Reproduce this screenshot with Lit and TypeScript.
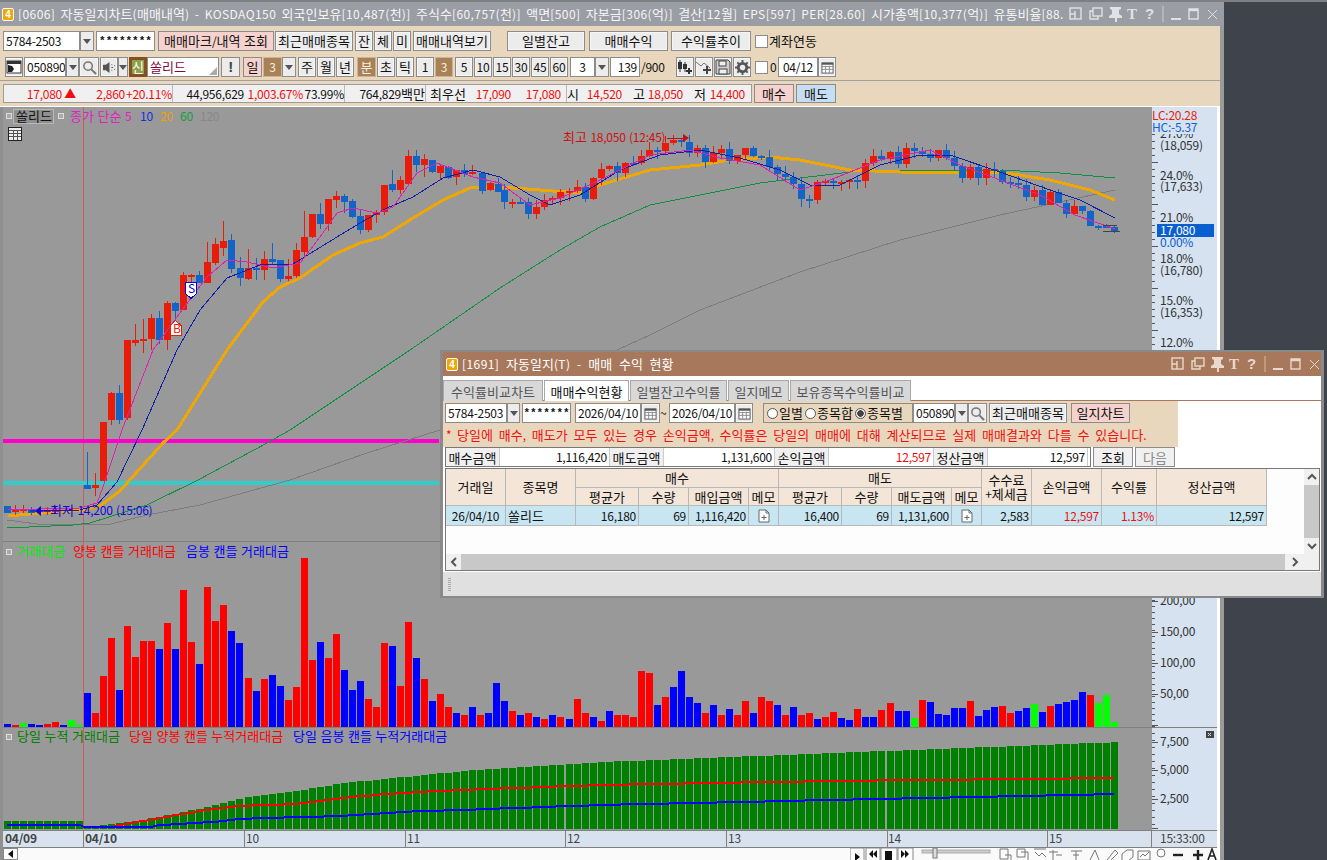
import { LitElement, html, css, svg, nothing } from "lit";
import { customElement } from "lit/decorators.js";

type Item = { x: number; e: number; t?: unknown; c: string };
const X = (j: number) => Math.round(84 + 8.025 * j);
const it = (x: number, e: number, t: unknown, c = "b"): Item => ({ x, e, t, c });

/* Hangul runs sit at 13px (12px advance), digits and Latin at a tighter 12px. */
const runs = (s: string) => s.match(/[\uac00-\ud7a3]+|[^\uac00-\ud7a3]+/g) ?? [];
const isK = (r: string) => /[\uac00-\ud7a3]/.test(r);
const m = (s: string) => html`<span>${runs(s).map((r) => (isK(r) ? html`<span class="k">${r}</span>` : r))}</span>`;
const tx = (x: number, y: number, fill: string, s: string, cls = "") =>
  svg`<text x=${x} y=${y} fill=${fill} class=${cls}>${runs(s).map((r) => (isK(r) ? svg`<tspan class="k">${r}</tspan>` : svg`<tspan>${r}</tspan>`))}</text>`;

const lerp = (p: number[][], x: number) => {
  if (x <= p[0][0]) return p[0][1];
  for (let i = 1; i < p.length; i++) {
    if (x <= p[i][0]) {
      const [a, b] = p[i - 1], [c, d] = p[i];
      return b + ((d - b) * (x - a)) / (c - a);
    }
  }
  return p[p.length - 1][1];
};
const pts = (p: number[][]) => p.map((q) => q.join(",")).join(" ");

/* --- candles: centre x, body top, body bottom, wick top, wick bottom, colour --- */
const zc = [
  [226,660,668,612,678,"r"],[250,657,663,597,700,"r"],[274,594,657,582,690,"r"],[298,594,660,573,672,"b"],
  [322,549,660,543,690,"r"],[346,549,573,546,600,"b"],[370,465,570,456,570,"r"],[394,465,471,462,490,"r"],
  [418,465,489,453,489,"b"],[442,426,489,366,489,"r"],[466,372,429,354,435,"r"],[490,363,384,303,408,"r"],
  [514,360,447,342,459,"b"],[541,444,474,411,498,"b"],[565,444,477,387,480,"r"],[589,444,450,414,480,"b"],
  [613,417,450,393,480,"r"],[637,417,426,369,432,"b"],[661,420,477,420,486,"b"],[685,468,477,417,483,"r"],
  [709,390,468,369,474,"r"],[733,351,396,273,408,"r"],[757,282,351,282,354,"r"],[781,282,312,249,327,"b"],
  [805,237,312,237,333,"r"],[829,228,240,213,264,"r"],[853,228,246,222,279,"b"],[877,243,291,237,294,"b"],
  [901,288,330,270,342,"b"],[925,285,330,285,336,"r"],[949,276,285,270,309,"r"],[973,195,276,195,285,"r"],
  [997,192,210,150,216,"b"],[1021,180,210,168,222,"r"],[1045,108,192,90,192,"r"],[1069,108,135,90,156,"b"],
  [1093,117,135,102,171,"r"],[1117,120,156,120,159,"b"],[1141,138,159,135,177,"r"],[1165,141,174,138,177,"b"],
  [1189,150,171,150,195,"r"],[1213,150,162,132,171,"b"],[1237,156,162,135,165,"r"],[1265,159,213,159,222,"b"],
  [1289,189,210,186,213,"r"],[1313,192,216,174,216,"b"],
] as [number, number, number, number, number, string][];

const candles: [number, number, number, number, number, string][] = [
  [7,506,513,506,513,"b"],[15,509,512,505,515,"r"],[23,509,511,505,513,"r"],[31,509,513,507,515,"b"],
  [39,510,511,507,514,"r"],[47,510,512,507,515,"r"],[55,510,511,507,514,"r"],
  [87,485,489,452,489,"b"],[95,485,488,473,496,"r"],[103,422,481,422,481,"r"],[111,393,420,392,425,"r"],
  [119,393,420,385,424,"b"],[127,340,418,340,420,"r"],
  ...zc.map((c) => [Math.round(60 + c[0] / 3), 120 + c[1] / 3, 120 + c[2] / 3, 120 + c[3] / 3, 120 + c[4] / 3, c[5]] as [number, number, number, number, number, string]),
];
const closePath = [[495,190],[510,200],[525,206],[540,208],[555,200],[570,197],[590,192],[600,178],[615,172],[635,165],[650,152],[665,150],[680,148],[695,154],[710,160],[725,157],[745,156],[765,167],[785,180],[800,190],[812,195],[825,180],[845,176],[865,170],[880,160],[895,155],[915,158],[930,150],[950,158],[965,172],[980,176],[1000,182],[1020,186],[1040,195],[1060,198],[1072,212],[1085,224],[1100,227],[1117,230]];
{
  const rnd = (n: number) => { const s = Math.sin(n * 12.9898) * 43758.5453; return s - Math.floor(s); };
  let prev = 190;
  for (let j = 52; j <= 128; j++) {
    const x = X(j) + 3;
    if (x < 496) continue;
    const amp = x > 1085 ? 3 : 20;
    const c = lerp(closePath, x) + (rnd(j) - 0.5) * amp;
    const top = Math.round(Math.min(prev, c)), bot = Math.max(top + 2, Math.round(Math.max(prev, c)));
    const wk = x > 1085 ? 2 : 8;
    candles.push([x, top, bot, top - Math.round(rnd(j + 300) * wk), bot + Math.round(rnd(j + 500) * wk), c < prev ? "r" : "b"]);
    prev = c;
  }
}
const cPath = (col: string) => candles.filter((c) => c[5] === col).map((c) => {
  const x = Math.round(c[0]), a = Math.round(c[1]), b = Math.round(c[2]), u = Math.round(c[3]), d = Math.round(c[4]);
  return `M${x - 3} ${a}h7v${Math.max(b - a, 2)}h-7zM${x} ${u}h1v${d - u}h-1z`;
}).join("");

const ma5 = [[8,510],[40,509],[80,508],[97,503],[103,487],[122,430],[153,350],[177,317],[207,277],[227,260],[247,262],[273,268],[300,263],[320,237],[337,213],[353,208],[377,213],[393,207],[417,173],[437,163],[473,177],[500,183],[530,205],[560,198],[600,180],[650,155],[690,150],[720,158],[760,165],[800,190],[830,180],[880,160],[930,150],[960,165],[1000,180],[1040,195],[1075,215],[1115,229]];
const ma10 = [[40,511],[80,510],[97,505],[117,482],[142,430],[177,350],[200,310],[227,278],[260,265],[293,264],[337,237],[360,223],[387,208],[413,197],[443,178],[473,170],[500,177],[530,195],[550,205],[580,195],[620,170],[660,155],[700,150],[740,158],[780,170],[810,185],[840,185],[880,165],[920,155],[950,155],[1000,172],[1050,190],[1080,200],[1115,218]];
const ma20 = [[8,516],[30,514],[83,510],[100,506],[120,491],[127,483],[163,443],[177,430],[227,350],[263,302],[280,287],[300,278],[333,255],[360,243],[383,237],[413,218],[443,200],[470,188],[500,187],[540,190],[580,193],[600,185],[650,170],[700,165],[730,160],[770,157],[800,160],[850,170],[900,172],[950,173],[1000,172],[1050,180],[1090,190],[1115,200]];
const ma60 = [[7,528],[73,525],[90,523],[147,505],[198,480],[267,443],[290,430],[410,350],[500,288],[560,250],[600,227],[650,205],[700,195],[760,183],[800,178],[850,172],[900,170],[1000,170],[1060,173],[1115,178]];
const ma120 = [[7,520],[37,524],[77,524],[107,525],[147,515],[200,505],[290,480],[367,453],[440,430],[650,335],[700,310],[800,272],[900,240],[1000,215],[1060,202],[1115,190]];

/* --- volume --- */
const zv: [number, string][] = [[429,"b"],[489,"r"],[378,"r"],[264,"r"],[420,"b"],[228,"r"],[321,"r"],[273,"r"],[273,"r"],[297,"b"],[219,"r"],[297,"b"],[120,"r"],[276,"r"],[342,"b"],[111,"r"],[213,"r"],[165,"r"],[243,"b"],[279,"b"],[384,"r"],[423,"b"],[387,"r"],[375,"b"],[408,"b"],[450,"r"],[411,"r"],[24,"r"],[330,"r"],[276,"b"],[324,"r"],[252,"r"],[360,"b"],[420,"b"],[393,"b"],[447,"r"],[471,"r"],[279,"r"],[288,"b"],[408,"r"],[216,"r"],[324,"b"],[387,"r"],[453,"b"],[432,"r"]];
const midV: [number, string][] = [[20,"r"],[14,"b"],[12,"r"],[20,"b"],[12,"r"],[14,"b"],[44,"b"],[26,"b"],[16,"r"],[12,"b"],[14,"r"],[10,"b"],[8,"r"],[12,"b"],[10,"r"],[8,"b"],[28,"r"],[14,"r"],[10,"b"],[6,"r"],[16,"b"],[12,"r"],[12,"r"],[10,"r"],[56,"r"],[54,"r"],[22,"b"],[30,"r"],[40,"b"],[56,"b"],[30,"b"],[24,"b"],[14,"r"],[22,"b"],[12,"r"],[18,"b"],[12,"r"],[26,"r"],[14,"b"],[30,"r"],[26,"r"],[22,"b"],[12,"r"],[20,"b"],[12,"r"],[14,"r"],[8,"b"],[10,"r"]];
const endV: [number, string][] = [[66,"r"],[84,"b"],[90,"b"],[57,"r"],[81,"b"],[81,"b"],[60,"r"],[39,"r"],[63,"b"],[63,"b"],[84,"g"],[30,"r"],[36,"b"],[72,"b"],[75,"b"],[54,"b"],[54,"b"],[33,"r"],[78,"b"],[60,"b"],[51,"b"],[48,"r"],[69,"r"],[63,"b"],[54,"b"],[42,"g"],[66,"b"],[48,"r"],[42,"b"],[36,"b"],[30,"b"],[6,"b"],[15,"r"],[39,"g"],[15,"g"],[96,"g"]];
const preV: [number, string][] = [[3,"b"],[2,"r"],[4,"g"],[3,"b"],[2,"b"],[3,"r"],[5,"r"],[2,"b"],[7,"g"],[2,"g"]];
const vols: [number, number, string][] = [
  ...preV.map((v, i) => [4 + 8 * i, v[0], v[1]] as [number, number, string]),
  ...zv.map((v, i) => [X(i), (531 - v[0]) / 3, v[1]] as [number, number, string]),
  ...midV.map((v, i) => [X(45 + i), v[0], v[1]] as [number, number, string]),
  ...endV.map((v, i) => [X(93 + i), (110 - v[0]) / 3, v[1]] as [number, number, string]),
];
const vPath = (col: string) => vols.filter((v) => v[2] === col).map((v) => `M${v[0]} ${727 - Math.round(v[1])}h7v${Math.round(v[1])}h-7z`).join("");

/* --- cumulative --- */
const cumG = [[84,827],[120,823],[160,816],[200,808],[240,798],[300,790],[340,783],[400,777],[460,771],[600,762],[830,753],[1117,742]];
const cumR = [[84,827],[110,827],[120,825],[160,818],[200,811],[240,806],[300,804],[340,798],[400,793],[460,790],[600,785],[830,781],[1117,778]];
const cumB = [[84,827],[155,827],[160,825],[200,823],[240,819],[300,817],[340,816],[400,812],[460,810],[600,805],[830,800],[1117,794]];
const step = (p: number[][]) => {
  const out: string[] = ["7,825", "80,825", "84,827"];
  for (let j = 0; j < 129; j++) out.push(`${X(j) + 3},${Math.round(lerp(p, X(j) + 3))}`);
  return out.join(" ");
};
const gPath = (() => {
  let d = "";
  for (let i = 0; i < 10; i++) d += `M${4 + 8 * i} 821h7v8h-7z`;
  for (let j = 0; j < 129; j++) { const t = Math.round(lerp(cumG, X(j))); d += `M${X(j)} ${t}h7v${829 - t}h-7z`; }
  return d;
})();

const ticks = (x: number, ys: number[], len = 4) => ys.map((y) => `M${x} ${y}h${len}`).join("");
const range = (a: number, b: number, s: number) => { const o: number[] = []; for (let y = a; y <= b; y += s) o.push(y); return o; };

const winIcons = svg`
  <g fill="none" stroke="currentColor" stroke-width="1.4">
    <rect x="1" y="2" width="11" height="11"/><path d="M1 8h5v5M6 8V5h0"/>
    <rect x="24" y="2" width="9" height="8"/><path d="M24 5h-3v8h8v-3"/>
    <path d="M123 8h10" stroke-width="2" transform="translate(-21 5)"/>
    <rect x="120" y="3" width="9" height="10" stroke-width="1.4"/><path d="M120 4h9" stroke-width="2.4"/>
    <path d="M139 4l9 9M148 4l-9 9" stroke-width="1"/>
    <path d="M94 0v16" stroke-width="1" opacity=".7"/>
  </g>
  <path fill="currentColor" d="M41 1h11v2l-2 1v4l3 2v2h-5v4h-2v-4h-6v-2l3-2V4l-2-1z"/>
  <text class="wt" x="58" y="13">T</text><text class="wq" x="76" y="13">?</text>`;

const iconDock = html`<svg viewBox="0 0 16 16" width="16" height="16"><rect x="1" y="2" width="14" height="12" fill="#fff" stroke="#333"/><rect x="1" y="2" width="14" height="3" fill="#333"/><path d="M2 6v7h4l2-3-2-3z" fill="#222"/></svg>`;
const iconSearch = html`<svg viewBox="0 0 16 16" width="15" height="15"><circle cx="6.5" cy="6.5" r="4.5" fill="none" stroke="#777" stroke-width="1.6"/><path d="M10 10l5 5" stroke="#777" stroke-width="2.2"/></svg>`;
const iconCal = html`<svg viewBox="0 0 14 14" width="13" height="13"><rect x="1" y="2" width="12" height="11" fill="#fff" stroke="#555"/><path d="M1 3h12" stroke="#555" stroke-width="2"/><path d="M1 6h12M1 9h12M5 5v8M9 5v8" stroke="#888"/></svg>`;
const iconSpk = html`<svg viewBox="0 0 16 14" width="15" height="13"><path d="M1 4h3l4-3v12l-4-3H1z" fill="#555"/><path d="M10 4h1M10 7h2M10 10h1M13 5h1M13 9h1" stroke="#555"/></svg>`;
const iconCandle = html`<svg viewBox="0 0 16 16" width="16" height="16"><path d="M3 1v12M8 3v10" stroke="#333"/><rect x="1" y="3" width="4" height="7" fill="#333"/><rect x="6" y="5" width="4" height="5" fill="#333"/><path d="M12 9v6M9 12h6" stroke="#333" stroke-width="2"/></svg>`;
const iconLine = html`<svg viewBox="0 0 16 16" width="16" height="16"><path d="M0 3l5 4 3-3 6 5" fill="none" stroke="#777"/><path d="M11 7v8M7 11h8" stroke="#444" stroke-width="2"/></svg>`;
const iconSave = html`<svg viewBox="0 0 16 16" width="16" height="16"><path d="M1 1h12l2 2v12H1z" fill="#cfcfcf" stroke="#444"/><rect x="4" y="2" width="7" height="5" fill="#eee" stroke="#444"/><rect x="4" y="10" width="8" height="5" fill="#eee" stroke="#444"/></svg>`;
const iconGear = html`<svg viewBox="0 0 16 16" width="15" height="15"><circle cx="8" cy="8" r="4.5" fill="none" stroke="#555" stroke-width="3"/><path d="M8 0v3M8 13v3M0 8h3M13 8h3M2.5 2.5l2 2M11.5 11.5l2 2M13.500 2.500l-2 2M4.500 11.500l-2 2" stroke="#555" stroke-width="2"/></svg>`;
const iconMemo = html`<svg viewBox="0 0 12 14" width="12" height="14"><path d="M1 1h7l3 3v9H1z" fill="#fff" stroke="#666"/><path d="M8 1v3h3" fill="none" stroke="#666"/><path d="M6 6v5M3.500 8.500h5" stroke="#666"/></svg>`;
const chev = (d: string) => html`<svg viewBox="0 0 10 10" width="10" height="10"><path d=${d} fill="none" stroke="#555" stroke-width="2"/></svg>`;

const tbSvg = svg`
  <g class="tbi">
    <rect x="0" y="0" width="14" height="14" fill="#fff" stroke="#888"/><path d="M5 6v8l5-4z" fill="#111" transform="translate(0 -1)"/>
    <rect x="16" y="0" width="14" height="14" fill="#fff" stroke="#888"/><path d="M23 2l-4 4 4 4zM27 2l-4 4 4 4z" fill="#111"/>
    <rect x="31" y="0" width="16" height="14" fill="#fff" stroke="#888"/><rect x="35" y="3" width="7" height="9" fill="#111"/>
    <rect x="48" y="0" width="15" height="14" fill="#fff" stroke="#888"/><path d="M51 2l4 4-4 4zM55 2l4 4-4 4z" fill="#111"/>
    <rect x="72" y="2" width="68" height="3" fill="#ccc" stroke="#aaa"/><rect x="83" y="0" width="4" height="10" fill="#ddd" stroke="#777"/>
    <g fill="none" stroke="#777">
      <path d="M150 1h8v10h-8zM155 7h6v6M167 1h8v8h-8zM171 4h7v8"/>
      <path d="M184 1h12M185 4l4 4 3-3 4 4"/>
      <path d="M203 2v11M199 4h9M206 7h6"/><path d="M221 3h11M226 3v10M223 7h6"/>
      <path d="M240 12l5-10 4 10"/><path d="M257 12l8-10 3 3-8 8z"/><path d="M272 6l5-4h6v7l-5 4h-6z"/><path d="M288 3h12v9h-12zM290 9l3-3 2 2 4-4"/>
      <circle cx="311" cy="5" r="4"/>
    </g>
    <path d="M323 7h10" stroke="#222" stroke-width="2.4"/><path d="M343 7h10M348 2v10" stroke="#222" stroke-width="2.400"/>
    <path d="M358 12l4-11 4 11M360 8h4" fill="none" stroke="#222" stroke-width="1.600"/>
  </g>`;

@customElement("app-root")
export class AppRoot extends LitElement {
  static styles = css`
    :host { display: block; position: relative; width: 1327px; height: 860px; overflow: hidden; background: #3f434b;
      font: 12px/1 "Noto Sans CJK KR", "Liberation Sans", sans-serif; color: #111; letter-spacing: -.25px; word-spacing: 1px; }
    * { box-sizing: border-box; }
    svg { display: block; }
    svg text { font-family: "Noto Sans CJK KR", "Liberation Sans", sans-serif; font-size: 12px; letter-spacing: -.25px; word-spacing: 1px; }
    .k { font-size: 13px; letter-spacing: .04px; }
    .desk-top { height: 2px; background: #7d7f83; }
    .win { width: 1224px; height: 858px; background: #fff; display: flex; flex-direction: column; border-right: 4px solid #9a9a9a; }
    .title { height: 24px; flex: none; margin-right: -4px; background: #9a9da3; color: #f5f5f5; display: flex; align-items: center; padding-left: 2px; overflow: hidden; position: relative; }
    .title.dlg { background: #a8785c; color: #fff; margin: 0; padding-left: 3px; }
    .badge { flex: none; width: 12px; height: 13px; border-radius: 2px; background: #f0a800; border: 1px solid #fff; color: #fff; font: bold 10px/11px "Liberation Sans", sans-serif; text-align: center; letter-spacing: 0; }
    .ttext { margin-left: 4px; white-space: pre; flex: none; word-spacing: 2.2px; letter-spacing: .42px; line-height: 18px; }
    .ttext .k { letter-spacing: .04px; }
    .title.dlg .ttext { word-spacing: 3.5px; }
    .wicons { position: absolute; right: 5px; top: 4px; color: #e0e2e4; }
    .title.dlg .wicons { color: #e9d9cc; right: 0; }
    .wt { font: bold 15px "Liberation Serif", serif !important; fill: currentColor; }
    .wq { font: bold 15px "Liberation Sans", sans-serif !important; fill: currentColor; }
    .tb { background: #e8d7bd; flex: none; }
    .tb1 { height: 54px; padding-top: 5px; display: flex; flex-direction: column; gap: 6px; }
    .tb-sep { height: 1px; flex: none; background: #a0a0a0; }
    .tb2 { height: 25px; padding-top: 3px; }
    .tb-white { height: 1px; flex: none; background: #fff; }
    .row { display: flex; height: 20px; align-items: stretch; flex: none; }
    .row > div { flex: none; display: flex; align-items: center; justify-content: center; white-space: pre; line-height: 14px; overflow: hidden; }
    .b { background: #ececec; border: 1px solid #8c8c8c; box-shadow: inset 0 0 0 1px #f6f6f6; }
    .pk { background: #f5d2cd; border: 1px solid #8c8c8c; }
    .bl { background: #c6def2; border: 1px solid #8c8c8c; }
    .br { background: #aa8055; color: #f4eee6; border: 1px solid #c9b49b; }
    .in { background: #fff; border: 1px solid #8c8c8c; justify-content: flex-start !important; padding-left: 2px; }
    .inc { background: #fff; border: 1px solid #8c8c8c; }
    .num { background: #fff; border: 1px solid #8c8c8c; justify-content: flex-end !important; padding-right: 2px; }
    .pw { background: #fff; border: 1px solid #8c8c8c; font: bold 11px "Liberation Mono", monospace; letter-spacing: 0; }
    .plain { background: transparent; justify-content: flex-start !important; }
    .chk { background: #fff; border: 1px solid #8c8c8c; height: 13px; align-self: center; }
    .ar { background: #ececec; border: 1px solid #8c8c8c; }
    .ar::after { content: ""; border: 4px solid transparent; border-top: 5px solid #555; border-bottom: 0; }
    .sin { background: #8fa04a; border: 3px solid #84501c; color: #fff; }
    .resz { background: #fff; border: 1px solid #8c8c8c; color: #7b0a3c; justify-content: flex-start !important; padding-left: 2px; position: relative; }
    .resz::after { content: ""; position: absolute; right: 1px; bottom: 1px; border: 4px solid transparent; border-right-color: #aaa; border-bottom-color: #aaa; }
    .bang { background: #ececec; border: 1px solid #8c8c8c; font: bold 15px "Liberation Sans", sans-serif; color: #444; }
    .info { margin-left: 3px; width: 749px; height: 19px; background: #f0f0f0; border: 1px solid #9c9c9c; display: flex; }
    .r3 { display: flex; height: 19px; }
    .r3 .cell { flex: none; display: flex; align-items: center; justify-content: flex-end; white-space: pre; height: 17px; }
    .red { color: #f00d0d; }
    .cl { justify-content: flex-start !important; }
    .div { border-right: 1px solid #b9b9b9; }
    .r3 .side { flex: none; height: 19px; display: flex; align-items: center; justify-content: center; margin-left: 2px; width: 40px; }
    .chart { flex: 1; display: flex; flex-direction: column; width: 1220px; padding-left: 3px; background: #fff; position: relative; }
    .edge { position: absolute; left: 0; top: 0; bottom: 0; width: 3px; background: #8f8f8f; }
    .bottom { height: 12px; flex: none; display: flex; justify-content: space-between; overflow: hidden; background: #fafafa; width: 1215px; }
    .lb { width: 15px; height: 12px; background: #fff; border: 1px solid #888; display: flex; align-items: flex-start; justify-content: center; padding-top: 1px; }
    .lb::after { content: ""; border: 4px solid transparent; border-right: 5px solid #111; border-left: 0; }
    .bold { font-weight: 700; }

    .dlgw { position: absolute; left: 440px; top: 350px; width: 884px; height: 248px; border: 3px solid #8a8a8a; border-top-width: 2px; border-bottom-width: 2px; background: #fff; display: flex; flex-direction: column; }
    .tabs { height: 25px; flex: none; padding-top: 4px; display: flex; border-bottom: 1px solid #a8785c; background: #fff; }
    .tab { height: 21px; flex: none; margin-right: 1px; background: #d8d8d8; border: 1px solid #a8a8a8; border-bottom: 0; color: #555; display: flex; align-items: center; justify-content: center; white-space: pre; }
    .tab.on { background: #fff; color: #111; }
    .form { width: 735px; height: 46px; flex: none; background: #e8d7bd; padding-top: 2px; }
    .msg { color: #f01010; margin: 4px 0 0 3px; white-space: pre; line-height: 15px; word-spacing: 3.3px; }
    .radios { background: #e8d7bd; border: 1px solid #8c8c8c; display: flex; justify-content: flex-start !important; padding-left: 3px; gap: 2px; }
    .rad { display: flex; align-items: center; gap: 1px; }
    .rad i { width: 11px; height: 11px; border-radius: 50%; background: #fff; border: 1px solid #555; display: block; }
    .rad i.on { background: radial-gradient(circle, #444 0 3px, #eee 3.5px); }
    .sum { height: 20px; flex: none; display: flex; }
    .sumbox { margin-left: 2px; width: 646px; display: flex; border: 1px solid #777; height: 20px; }
    .sumbox div { display: flex; align-items: center; flex: none; height: 18px; white-space: pre; }
    .sl { background: #f0f0f0; justify-content: center; width: 54px; border-right: 1px solid #ccc; }
    .sv { background: #fff; justify-content: flex-end; padding-right: 2px; border-right: 1px solid #ccc; }
    .sbtn { flex: none; width: 40px; height: 20px; display: flex; align-items: center; justify-content: center; background: #f0f0f0; border: 1px solid #8c8c8c; margin-left: 2px; }
    .dis { color: #888; }
    .tbl { margin: 1px 0 0 2px; width: 875px; height: 103px; flex: none; border: 1px solid #777; display: grid; grid-template-columns: 1fr 15px; grid-template-rows: 85px 16px; background: #fdfdfd; }
    .grid { display: grid; width: 821px; align-self: start; background: #b8b8b8; gap: 1px; padding: 0 1px 1px 0;
      grid-template-columns: 59px 69px 62px 49px 59px 29px 62px 49px 59px 29px 49px 69px 54px 109px;
      grid-template-rows: 18px 17px 19px; }
    .grid > div { display: flex; align-items: center; white-space: pre; line-height: 14px; }
    .h { background: #f3e5d8; justify-content: center; text-align: center; }
    .h2 { grid-row: span 2; }
    .d { background: #c8e6f2; justify-content: flex-end; padding-right: 2px; }
    .dc { justify-content: center !important; padding: 0; }
    .dl { justify-content: flex-start !important; padding: 0 0 0 2px; }
    .sp4 { grid-column: span 4; }
    .vs { background: #f0f0f0; display: flex; flex-direction: column; align-items: center; justify-content: space-between; }
    .vs .thumb { flex: 1; width: 100%; background: #c8c8c8; }
    .vs .end { height: 16px; display: flex; align-items: center; }
    .hs { background: #c8c8c8; display: flex; justify-content: space-between; }
    .hs span, .corner { width: 15px; background: #f0f0f0; display: flex; align-items: center; justify-content: center; }
    .hs span.rt { width: 19px; }
    .status { flex: 1; margin-top: 1px; background: #e0e0e0; display: flex; align-items: center; padding-left: 5px; }
    .grip { width: 3px; height: 13px; background: repeating-linear-gradient(0deg, #aaa 0 1px, transparent 1px 2px); }
    .w110 { width: 110px; } .w111 { width: 111px; } .w105 { width: 105px; } .w100 { width: 100px; }
  `;

  private row(items: Item[], origin = 0) {
    let pos = origin;
    return items.map((i) => {
      const g = i.x - pos;
      pos = i.e;
      const body = typeof i.t === "string" ? m(i.t) : i.t ?? nothing;
      return html`<div class=${i.c} style="margin-left:${g}px;width:${i.e - i.x}px">${body}</div>`;
    });
  }

  private renderTop() {
    const r1 = [it(3,80,"5784-2503","in"),it(80,94,"","ar"),it(96,155,"********","pw"),it(158,274,"매매마크/내역 조회","pk"),it(275,353,"최근매매종목"),it(355,373,"잔"),it(374,392,"체"),it(393,411,"미"),it(413,491,"매매내역보기"),it(507,585,"일별잔고"),it(589,668,"매매수익"),it(671,751,"수익률추이"),it(755,768,"","chk"),it(769,820,"계좌연동","plain")];
    const r2 = [it(5,23,iconDock),it(24,66,"050890","in"),it(66,79,"","ar"),it(79,99,iconSearch),it(100,118,iconSpk),it(118,128,"","ar"),it(129,147,"신","sin"),it(147,219,"쏠리드","resz"),it(221,240,"!","bang"),it(243,262,"일","pk"),it(263,282,"3","br"),it(282,296,"","ar"),it(298,316,"주"),it(317,335,"월"),it(336,354,"년"),it(357,376,"분","br"),it(377,395,"초"),it(396,414,"틱"),it(416,434,"1"),it(435,453,"3","br"),it(455,473,"5"),it(474,492,"10"),it(493,511,"15"),it(512,530,"30"),it(531,549,"45"),it(550,568,"60"),it(570,595,"3","inc"),it(595,609,"","ar"),it(610,640,"139","num"),it(641,668,"/900","plain"),it(676,694,iconCandle),it(695,713,iconLine),it(714,732,iconSave),it(733,751,iconGear),it(755,768,"","chk"),it(770,777,"0","plain"),it(778,818,"04/12","inc"),it(818,836,iconCal)];
    const cells: [number, number, string, string][] = [
      [4,62,"17,080","red"],[62,76,"▲","red"],[76,125,"2,860","red"],[125,173,"+20.11%","red div"],
      [173,244,"44,956,629",""],[244,303,"1,003.67%","red"],[303,345,"73.99%","div"],[345,426,"764,829백만","div"],
      [426,466,"최우선",""],[466,511,"17,090","red"],[511,561,"17,080","red"],[561,567,"","div"],[567,584,"시","cl"],[584,622,"14,520","red"],[622,645,"고",""],[645,683,"18,050","red"],[683,706,"저",""],[706,745,"14,400","red"],
    ];
    return html`
      <div class="tb tb1">
        <div class="row">${this.row(r1)}</div>
        <div class="row">${this.row(r2)}</div>
      </div>
      <div class="tb-sep"></div>
      <div class="tb tb2">
        <div class="r3">
          <div class="info">${cells.map((c) => html`<div class="cell ${c[3]}" style="width:${c[1] - c[0]}px">${m(c[2])}</div>`)}</div>
          <div class="side pk">${m("매수")}</div><div class="side bl">${m("매도")}</div>
        </div>
      </div>
      <div class="tb-white"></div>`;
  }

  private pane1() {
    return html`<svg width="1214" height="435" viewBox="3 107 1214 435">
      <rect x="3" y="107" width="1149" height="435" fill="#999"/>
      <rect x="1152" y="107" width="65" height="435" fill="#d6e2f0"/>
      <path d="M3 541.500h1214" stroke="#808080" shape-rendering="crispEdges"/>
      <path d="M83.500 107v435" stroke="#c86060" shape-rendering="crispEdges"/>
      <rect x="3" y="439" width="436" height="4" fill="#ff00cc"/>
      <rect x="3" y="481" width="436" height="4" fill="#33cccc"/>
      <g fill="none" shape-rendering="crispEdges">
        <polyline points=${pts(ma120)} stroke="#7c7c7c"/>
        <polyline points=${pts(ma60)} stroke="#109040"/>
        <polyline points=${pts(ma20)} stroke="#f0a800" stroke-width="3"/>
      </g>
      <path d=${cPath("r")} fill="#e81c08" shape-rendering="crispEdges"/>
      <path d=${cPath("b")} fill="#1464c8" shape-rendering="crispEdges"/>
      <g fill="none" shape-rendering="crispEdges">
        <polyline points=${pts(ma10)} stroke="#1020a8"/>
        <polyline points=${pts(ma5)} stroke="#e020b0"/>
      </g>
      <path d="M185.500 282.500h11v11l-5.500 5-5.500-5z" fill="#fff" stroke="#0000e0" shape-rendering="crispEdges"/>
      <text x="188" y="293" fill="#0000e0">S</text>
      <path d="M170.500 325.500l5-5 5.500 5v10h-10.500z" fill="#fff" stroke="#e81c08" shape-rendering="crispEdges"/>
      <text x="173" y="333" fill="#e81c08">B</text>
      ${tx(563, 142, "#d01010", "최고 18,050 (12:45)")}
      <path d="M667 138h18" stroke="#c01010" shape-rendering="crispEdges"/><path d="M683 134l6 4-6 4z" fill="#c01010"/>
      ${tx(50, 515, "#0a0ae0", "최저 14,200 (15:06)")}
      <path d="M30 511h20" stroke="#0a0ae0" stroke-width="1"/><path d="M35 511l6-5v10z" fill="#0a0ae0"/>
      <rect x="6.500" y="113.500" width="5" height="5" fill="#aaa" stroke="#ddd"/>
      <rect x="13.500" y="109.500" width="40" height="14" fill="#8f8f8f" stroke="#b8b8b8"/>
      ${tx(16, 121, "#111", "쏠리드")}
      <rect x="58.500" y="113.500" width="5" height="5" fill="#aaa" stroke="#ddd"/>
      ${tx(70, 121, "#e020c0", "종가 단순 5")}
      <text x="140" y="121" fill="#1030e0">10</text><text x="160" y="121" fill="#f0a000">20</text>
      <text x="180" y="121" fill="#10a040">60</text><text x="200" y="121" fill="#888">120</text>
      <g shape-rendering="crispEdges"><rect x="8.500" y="127.500" width="13" height="13" fill="#eee" stroke="#222"/><path d="M9 130.500h12M9 133.500h12M9 136.500h12M13.500 131v9M17.500 131v9" stroke="#555"/></g>
      <path d=${ticks(1152, range(120, 540, 42), 6) + ticks(1152, range(127, 540, 7), 3)} stroke="#555" shape-rendering="crispEdges"/>
      <g fill="#333">
        <text x="1160" y="138">27.0%</text><text x="1160" y="150">(18,059)</text>
        <text x="1160" y="180">24.0%</text><text x="1160" y="191">(17,633)</text>
        <text x="1160" y="222">21.0%</text>
        <text x="1160" y="263">18.0%</text><text x="1160" y="275">(16,780)</text>
        <text x="1160" y="305">15.0%</text><text x="1160" y="317">(16,353)</text>
        <text x="1160" y="347">12.0%</text>
      </g>
      <rect x="1152" y="108" width="64" height="26" fill="#d6e2f0"/>
      <text x="1152" y="120" fill="#e81c08">LC:20.28</text><text x="1152" y="132" fill="#1060d8">HC:-5.37</text>
      <rect x="1157" y="224" width="57" height="13" fill="#0a5fd0"/><text x="1160" y="235" fill="#fff">17,080</text>
      <text x="1160" y="247" fill="#0a5fd0">0.00%</text>
      <path d="M1103 225.500h14M1103 231.500h17" stroke="#444" shape-rendering="crispEdges"/>
    </svg>`;
  }

  private pane2() {
    return html`<svg width="1214" height="186" viewBox="3 542 1214 186">
      <rect x="3" y="542" width="1149" height="186" fill="#999"/>
      <rect x="1152" y="542" width="65" height="186" fill="#d6e2f0"/>
      <path d="M3 727.500h1214" stroke="#808080" shape-rendering="crispEdges"/>
      <path d="M83.500 542v186" stroke="#c86060" shape-rendering="crispEdges"/>
      <path d=${vPath("r")} fill="#f00"/><path d=${vPath("b")} fill="#00f"/><path d=${vPath("g")} fill="#0f0"/>
      <rect x="6.500" y="549.500" width="5" height="5" fill="#aaa" stroke="#ddd"/>
      ${tx(17, 556, "#00ee00", "거래대금")}
      ${tx(73, 556, "#f00", "양봉 캔들 거래대금")}
      ${tx(186, 556, "#00f", "음봉 캔들 거래대금")}
      <path d=${ticks(1152, [601,632,663,694,725], 6) + ticks(1152, range(570,727,6), 3)} stroke="#555" shape-rendering="crispEdges"/>
      <g fill="#333"><text x="1160" y="605">200,00</text><text x="1160" y="636">150,00</text><text x="1160" y="667">100,00</text><text x="1160" y="698">50,00</text></g>
    </svg>`;
  }

  private pane3() {
    return html`<svg width="1214" height="102" viewBox="3 728 1214 102">
      <rect x="3" y="728" width="1149" height="102" fill="#999"/>
      <rect x="1152" y="728" width="65" height="102" fill="#d6e2f0"/>
      <path d=${gPath} fill="#008000"/>
      <path d="M83.500 728v101" stroke="#c86060" shape-rendering="crispEdges"/>
      <g fill="none" stroke-width="2" shape-rendering="crispEdges">
        <polyline points=${step(cumR)} stroke="#f00"/>
        <polyline points=${step(cumB)} stroke="#00f"/>
      </g>
      <rect x="6.500" y="734.500" width="5" height="5" fill="#aaa" stroke="#ddd"/>
      ${tx(17, 741, "#008000", "당일 누적 거래대금")}
      ${tx(129, 741, "#f00", "당일 양봉 캔들 누적거래대금")}
      ${tx(293, 741, "#00f", "당일 음봉 캔들 누적거래대금")}
      <path d=${ticks(1152, [742,770,799,828], 6) + ticks(1152, range(733,829,7), 3)} stroke="#555" shape-rendering="crispEdges"/>
      <g fill="#333"><text x="1160" y="746">7,500</text><text x="1160" y="774">5,000</text><text x="1160" y="803">2,500</text></g>
      <rect x="1206" y="731" width="8" height="7" fill="#444"/><path d="M1208 733l3 3M1211 733l-3 3" stroke="#ddd"/>
    </svg>`;
  }

  private pane4() {
    return html`<svg width="1214" height="18" viewBox="3 830 1214 18">
      <rect x="3" y="830" width="1214" height="18" fill="#d7e2ee"/>
      <path d="M3 830.500h1214M3 847.500h1214M83.500 830v17M244.500 830v17M405.500 830v17M565.500 830v17M726.500 830v17M887.500 830v17M1047.500 830v17M1151.500 830v17" stroke="#808080" shape-rendering="crispEdges"/>
      <g fill="#444">
        <text x="5" y="843" class="bold">04/09</text><text x="85" y="843" class="bold">04/10</text>
        <text x="246" y="843">10</text><text x="407" y="843">11</text><text x="567" y="843">12</text><text x="728" y="843">13</text><text x="888" y="843">14</text><text x="1049" y="843">15</text>
        <text x="1160" y="843">15:33:00</text>
      </g>
    </svg>`;
  }

  private renderDialog() {
    const r = [it(445,507,"5784-2503","in"),it(507,520,"","ar"),it(522,571,"*******","pw"),it(575,641,"2026/04/10","in"),it(641,660,iconCal),it(660,669,"~","plain"),it(669,735,"2026/04/10","in"),it(735,753,iconCal),
      it(763,913,html`<span class="rad"><i></i>${m("일별")}</span><span class="rad"><i></i>${m("종목합")}</span><span class="rad"><i class="on"></i>${m("종목별")}</span>`,"radios"),
      it(913,955,"050890","in"),it(955,968,"","ar"),it(968,987,iconSearch),it(989,1067,"최근매매종목"),it(1071,1130,"일지차트","pk")];
    const tabs: [string, number, boolean][] = [["수익률비교차트",100,false],["매매수익현황",85,true],["일별잔고수익률",97,false],["일지메모",61,false],["보유종목수익률비교",121,false]];
    const c = (s: string, cls = "h") => html`<div class=${cls}>${m(s)}</div>`;
    return html`<div class="dlgw">
      <div class="title dlg">
        <div class="badge">4</div><div class="ttext">${m("[1691] 자동일지(T) - 매매 수익 현황")}</div>
        <svg class="wicons" width="150" height="17" viewBox="0 0 150 17">${winIcons}</svg>
      </div>
      <div class="tabs">${tabs.map((t) => html`<div class="tab ${t[2] ? "on" : ""}" style="width:${t[1]}px">${m(t[0])}</div>`)}</div>
      <div class="form">
        <div class="row">${this.row(r, 443)}</div>
        <div class="msg">${m("* 당일에 매수, 매도가 모두 있는 경우 손익금액, 수익률은 당일의 매매에 대해 계산되므로 실제 매매결과와 다를 수 있습니다.")}</div>
      </div>
      <div class="sum">
        <div class="sumbox">
          ${c("매수금액","sl")}<div class="sv w110">1,116,420</div>
          ${c("매도금액","sl")}<div class="sv w111">1,131,600</div>
          ${c("손익금액","sl")}<div class="sv red w105">12,597</div>
          ${c("정산금액","sl")}<div class="sv w100">12,597</div>
        </div>
        ${c("조회","sbtn")}${c("다음","sbtn dis")}
      </div>
      <div class="tbl">
        <div class="grid">
          ${c("거래일","h h2")}${c("종목명","h h2")}
          ${c("매수","h sp4")}${c("매도","h sp4")}
          <div class="h h2"><span>${m("수수료")}<br>${m("+제세금")}</span></div>${c("손익금액","h h2")}${c("수익률","h h2")}${c("정산금액","h h2")}
          ${c("평균가")}${c("수량")}${c("매입금액")}${c("메모")}
          ${c("평균가")}${c("수량")}${c("매도금액")}${c("메모")}
          <div class="d dc">26/04/10</div>${c("쏠리드","d dl")}<div class="d">16,180</div><div class="d">69</div><div class="d">1,116,420</div><div class="d dc">${iconMemo}</div>
          <div class="d">16,400</div><div class="d">69</div><div class="d">1,131,600</div><div class="d dc">${iconMemo}</div>
          <div class="d">2,583</div><div class="d red">12,597</div><div class="d red">1.13%</div><div class="d">12,597</div>
        </div>
        <div class="vs"><div class="end">${chev("M1 7l4-4 4 4")}</div><div class="thumb"></div><div class="end">${chev("M1 3l4 4 4-4")}</div></div>
        <div class="hs"><span>${chev("M7 1L3 5l4 4")}</span><span class="rt">${chev("M3 1l4 4-4 4")}</span></div>
        <div class="corner"></div>
      </div>
      <div class="status"><div class="grip"></div></div>
    </div>`;
  }

  render() {
    return html`
      <div class="desk-top"></div>
      <div class="win">
        <div class="title">
          <div class="badge">4</div>
          <div class="ttext">${m("[0606] 자동일지차트(매매내역) - KOSDAQ150 외국인보유[10,487(천)] 주식수[60,757(천)] 액면[500] 자본금[306(억)] 결산[12월] EPS[597] PER[28.60] 시가총액[10,377(억)] 유통비율[88.")}</div>
          <svg class="wicons" width="150" height="17" viewBox="0 0 150 17">${winIcons}</svg>
        </div>
        ${this.renderTop()}
        <div class="chart">
          <div class="edge"></div>
          ${this.pane1()}${this.pane2()}${this.pane3()}${this.pane4()}
          <div class="bottom">
            <div class="lb"></div>
            <svg width="368" height="12" viewBox="0 0 368 12">${tbSvg}</svg>
          </div>
        </div>
      </div>
      ${this.renderDialog()}`;
  }
}
